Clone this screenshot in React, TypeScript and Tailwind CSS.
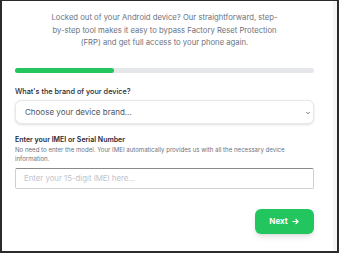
import React from 'react';

export default function App() {
  return (
    <div
      className="flex h-[253px] w-[339px] border-t border-l-2 border-r-2 border-b-2 border-[#2b2b2b] bg-white"
      style={{ fontFamily: 'Inter, "Noto Sans", sans-serif' }}
    >
      <div className="flex-1 pl-[13px] pt-[11px]">
        <div className="w-[299px]">
          <p className="mx-auto w-[234px] text-center text-[7.7px] leading-[12.5px] text-[#6b7280]">
            Locked out of your Android device? Our straightforward, step-by-step tool makes it easy to bypass Factory
            Reset Protection (FRP) and get full access to your phone again.
          </p>

          <div className="mt-[18px] h-[5px] w-full rounded-full bg-[#e5e7eb]">
            <div className="h-full w-[33%] rounded-full bg-[#22c55e]" />
          </div>

          <label className="mt-[13px] block text-[7.3px] font-medium leading-[12px] text-[#1f2937]">
            What's the brand of your device?
          </label>
          <div className="relative mt-[2.5px] flex h-[24px] items-center rounded-md border border-[#e5e7eb] bg-white pl-[9px] shadow-sm">
            <span className="text-[8px] text-[#4b5563]">Choose your device brand...</span>
            <svg className="absolute right-[3px] top-[10px] h-[4px] w-[4px]" viewBox="0 0 10 10">
              <path d="M1 3 L5 7 L9 3" fill="none" stroke="#4b5563" strokeWidth="2.2" />
            </svg>
          </div>

          <label className="mt-[11px] block text-[7px] font-semibold leading-[10px] text-[#1f2937]">
            Enter your IMEI or Serial Number
          </label>
          <p className="text-[6.1px] leading-[9px] text-[#6b7280]">
            No need to enter the model. Your IMEI automatically provides us with all the necessary device information.
          </p>
          <div className="mt-[5px] flex h-[21px] items-center rounded-[2px] border border-[#cfcfcf] border-t-[#8a8a8a] pl-[8px]">
            <span className="text-[7.8px] text-[#c0c4cc]">Enter your 15-digit IMEI here...</span>
          </div>

          <div className="mt-[19.5px] flex justify-end">
            <button className="flex h-[25px] w-[59px] items-center justify-center gap-[3px] rounded-md bg-[#22c55e] text-[8px] font-bold text-white shadow-md">
              Next
              <svg className="h-[9px] w-[9px]" viewBox="0 0 24 24" fill="none" stroke="white" strokeWidth="3" strokeLinecap="round" strokeLinejoin="round">
                <path d="M5 12h14M13 6l6 6-6 6" />
              </svg>
            </button>
          </div>
        </div>
      </div>
      <div className="w-[4px] bg-[#f5f5f5]" />
    </div>
  );
}
